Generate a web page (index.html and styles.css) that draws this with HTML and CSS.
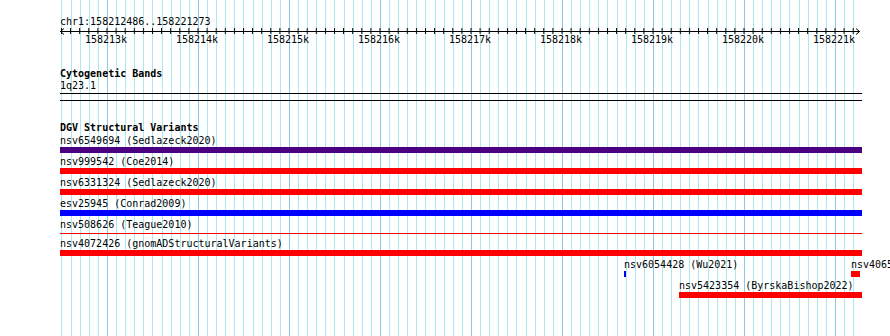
FILE: index.html
```html
<!DOCTYPE html>
<html>
    <head>
        <meta charset="utf-8">
        <title>chr1:158212486..158221273</title>
        <link rel="stylesheet" href="styles.css">
    </head>
    <body>
        <div class="view">
            <div class="loc">chr1:158212486..158221273</div>
            <svg class="ruler" width="802" height="18" viewBox="0 0 802 18">
                <defs>
                    <pattern id="ticks" patternUnits="userSpaceOnUse" x="1" y="0" width="9.1" height="18">
                        <line x1="0.5" y1="0" x2="0.5" y2="6" stroke="#000" stroke-width="1"/>
                    </pattern>
                </defs>
                <rect x="0" y="0" width="796" height="6" fill="url(#ticks)"/>
                <line x1="0" y1="3.5" x2="800" y2="3.5" stroke="#000"/>
                <polyline points="4,0.5 0.5,3.5 4,6.5" fill="none" stroke="#000"/>
                <polyline points="796,0.5 799.5,3.5 796,6.5" fill="none" stroke="#000"/>
                <g class="ticklabels">
                    <text x="46" y="15">158213k</text>
                    <text x="137" y="15">158214k</text>
                    <text x="228" y="15">158215k</text>
                    <text x="319" y="15">158216k</text>
                    <text x="410" y="15">158217k</text>
                    <text x="501" y="15">158218k</text>
                    <text x="592" y="15">158219k</text>
                    <text x="683" y="15">158220k</text>
                    <text x="774" y="15">158221k</text>
                </g>
            </svg>

            <div class="track-title first">Cytogenetic Bands</div>
            <div class="band-name">1q23.1</div>
            <div class="band"></div>

            <div class="track-title">DGV Structural Variants</div>
            <div class="feature">
                <div class="label">nsv6549694 (Sedlazeck2020)</div>
                <div class="bar purple"></div>
            </div>
            <div class="feature">
                <div class="label">nsv999542 (Coe2014)</div>
                <div class="bar red"></div>
            </div>
            <div class="feature">
                <div class="label">nsv6331324 (Sedlazeck2020)</div>
                <div class="bar red"></div>
            </div>
            <div class="feature">
                <div class="label">esv25945 (Conrad2009)</div>
                <div class="bar blue"></div>
            </div>
            <div class="feature">
                <div class="label">nsv508626 (Teague2010)</div>
                <div class="bar thin"></div>
            </div>
            <div class="feature">
                <div class="label">nsv4072426 (gnomADStructuralVariants)</div>
                <div class="bar red"></div>
            </div>
            <div class="row">
                <div class="feature placed" style="left:564px">
                    <div class="label">nsv6054428 (Wu2021)</div>
                    <div class="bar blue" style="width:2px"></div>
                </div>
                <div class="feature placed" style="left:791px">
                    <div class="label">nsv4065</div>
                    <div class="bar red" style="width:9px"></div>
                </div>
            </div>
            <div class="row">
                <div class="feature placed" style="left:619px">
                    <div class="label">nsv5423354 (ByrskaBishop2022)</div>
                    <div class="bar red" style="width:183px"></div>
                </div>
            </div>
        </div>
    </body>
</html>
```

FILE: styles.css
```css
html, body{
    margin: 0;
    background: #fff;
    overflow: hidden;
}
body{
    width: 890px;
    height: 336px;
    font-family: "DejaVu Sans Mono", "Liberation Mono", monospace;
    font-size: 10px;
    color: #000;
}
.view{                                  /* the track area with its grid lines */
    margin-left: 60px;
    width: 802px;
    height: 336px;
    padding-top: 16px;
    box-sizing: border-box;
    background-image:
        repeating-linear-gradient(90deg, transparent 0 47px, #8cc8e6 47px 48px, transparent 48px 91px),
        repeating-linear-gradient(90deg, transparent 0 1.4px, #aae9ef 1.4px 2.4px, transparent 2.4px 9.1px);
    background-size: 796px 100%;
    background-repeat: no-repeat;
}
.loc{
    line-height: 12px;
    height: 12px;
}
.ruler{
    display: block;
    overflow: visible;
}
.ticklabels text{
    font-family: "DejaVu Sans Mono", "Liberation Mono", monospace;
    font-size: 10px;
    text-anchor: middle;
    fill: #000;
}
.track-title{
    font-weight: bold;
    line-height: 12px;
    height: 12px;
    margin-top: 21px;
}
.track-title.first{
    margin-top: 22px;
}
.band-name{
    line-height: 12px;
    height: 12px;
}
.band{
    margin-top: 1px;
    height: 6px;
    border-top: 1px solid #000;
    border-bottom: 1px solid #000;
}
.feature{
    margin-bottom: 2px;
}
.label{
    line-height: 13px;
    height: 13px;
    white-space: nowrap;
}
.bar{
    height: 6px;
}
.purple{ background: #4b0082; }
.red{ background: #ff0000; }
.blue{ background: #0000ff; }
.thin{
    height: 1px;
    margin-top: 2px;
    margin-bottom: 3px;
    background: #ff0000;
}
.row{
    position: relative;
    height: 21px;
}
.feature.placed{
    position: absolute;
    top: 0;
    margin: 0;
}
```
